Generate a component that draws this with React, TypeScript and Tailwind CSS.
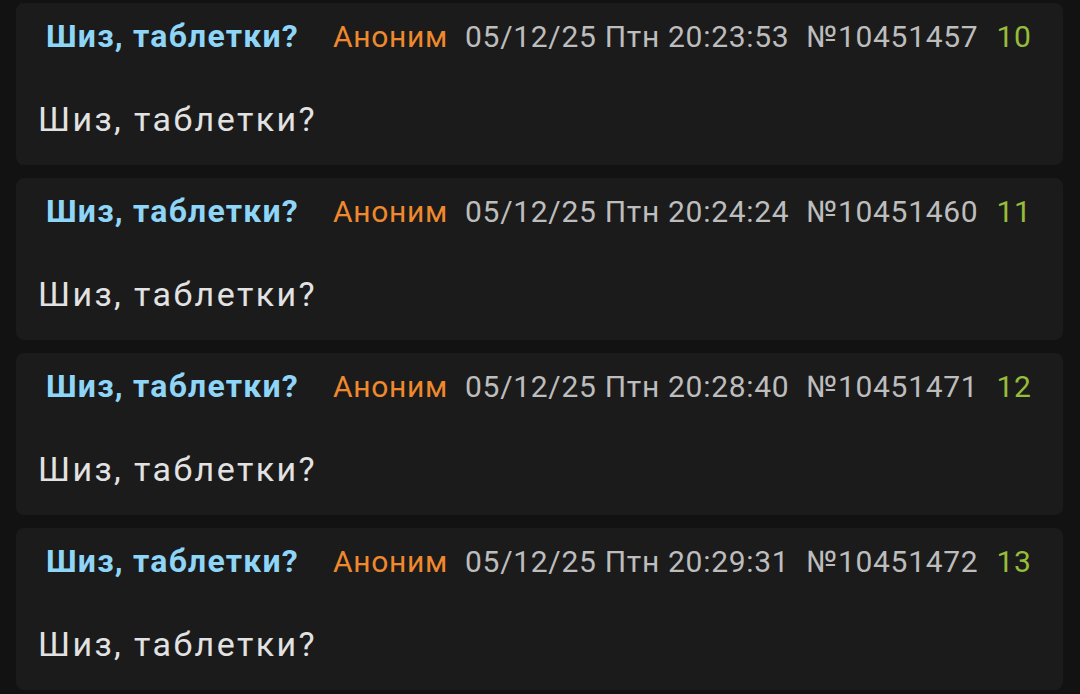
const posts = [
  { time: '20:23:53', num: '10451457', idx: 10 },
  { time: '20:24:24', num: '10451460', idx: 11 },
  { time: '20:28:40', num: '10451471', idx: 12 },
  { time: '20:29:31', num: '10451472', idx: 13 },
];

function Post({ time, num, idx }: { time: string; num: string; idx: number }) {
  return (
    <div className="h-[162px] rounded-[8px] bg-[#1b1b1b] pl-[22px] pr-4">
      <div className="flex items-baseline h-[68px] pt-[17px] pl-[8px] text-[30px] leading-none tracking-[0.7px] whitespace-nowrap">
        <span className="font-bold text-[32px] tracking-[1.2px] text-[#8ed5f7]">Шиз, таблетки?</span>
        <span className="ml-[34px] text-[#f0892e]">Аноним</span>
        <span className="ml-[17px] text-[#bdbdbd]">05/12/25 Птн {time}</span>
        <span className="ml-[17px] text-[#bdbdbd]">№{num}</span>
        <span className="ml-[18px] text-[#97bb3a]">{idx}</span>
      </div>
      <div className="pt-[31px] text-[34px] leading-none tracking-[2.4px] text-[#e2e2e2]">Шиз, таблетки?</div>
    </div>
  );
}

export default function App() {
  return (
    <div
      className="w-[1080px] h-[694px] bg-[#121212] pt-[3px] pl-4 pr-[17px] flex flex-col gap-[13px] overflow-hidden"
      style={{ fontFamily: 'Roboto, "Noto Sans", sans-serif' }}
    >
      {posts.map((p) => (
        <Post key={p.num} {...p} />
      ))}
    </div>
  );
}
